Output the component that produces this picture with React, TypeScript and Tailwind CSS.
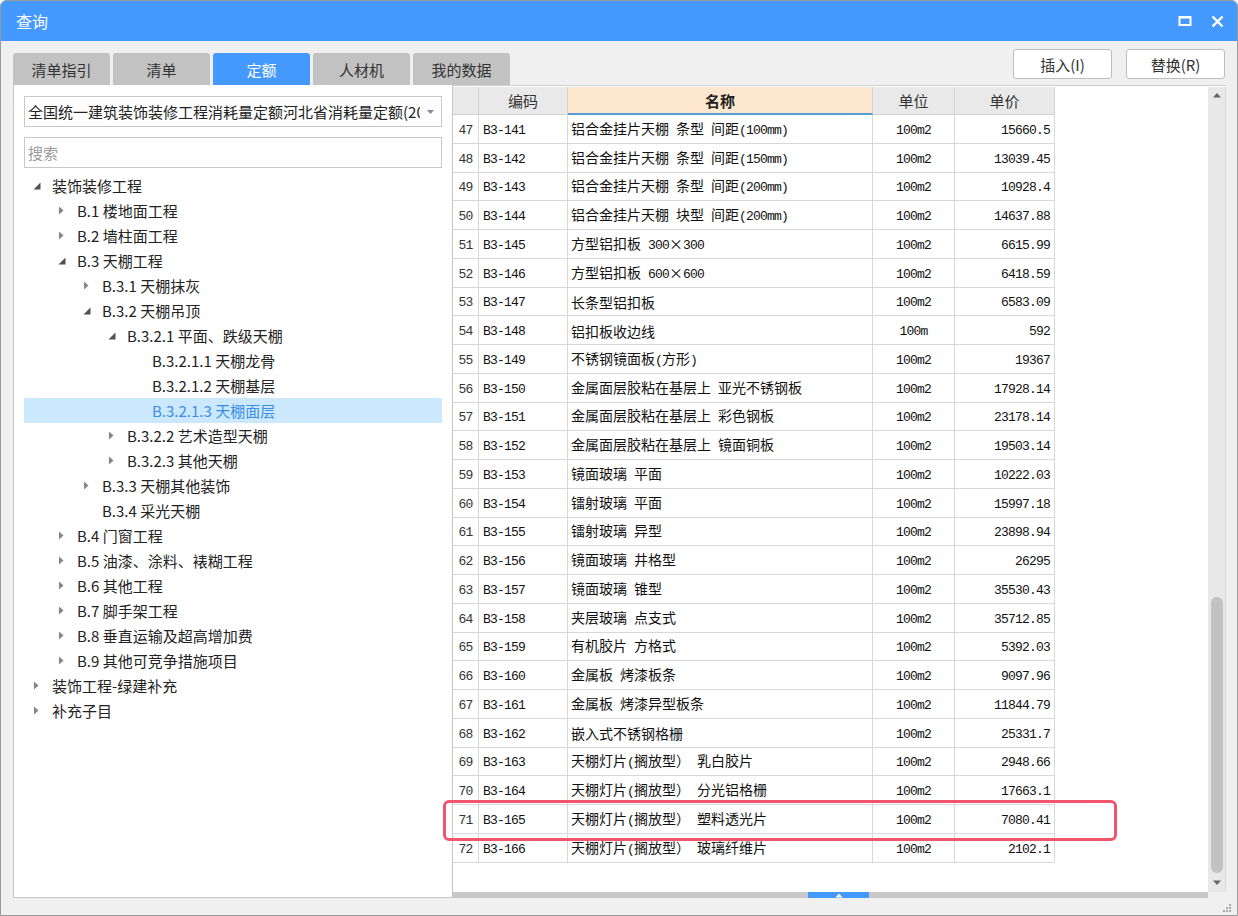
import React from "react";

type Row = [number, string, string, string, string];

const rows: Row[] = [
  [47, "B3-141", "铝合金挂片天棚 条型 间距(100mm)", "100m2", "15660.5"],
  [48, "B3-142", "铝合金挂片天棚 条型 间距(150mm)", "100m2", "13039.45"],
  [49, "B3-143", "铝合金挂片天棚 条型 间距(200mm)", "100m2", "10928.4"],
  [50, "B3-144", "铝合金挂片天棚 块型 间距(200mm)", "100m2", "14637.88"],
  [51, "B3-145", "方型铝扣板 300×300", "100m2", "6615.99"],
  [52, "B3-146", "方型铝扣板 600×600", "100m2", "6418.59"],
  [53, "B3-147", "长条型铝扣板", "100m2", "6583.09"],
  [54, "B3-148", "铝扣板收边线", "100m", "592"],
  [55, "B3-149", "不锈钢镜面板(方形)", "100m2", "19367"],
  [56, "B3-150", "金属面层胶粘在基层上 亚光不锈钢板", "100m2", "17928.14"],
  [57, "B3-151", "金属面层胶粘在基层上 彩色钢板", "100m2", "23178.14"],
  [58, "B3-152", "金属面层胶粘在基层上 镜面铜板", "100m2", "19503.14"],
  [59, "B3-153", "镜面玻璃 平面", "100m2", "10222.03"],
  [60, "B3-154", "镭射玻璃 平面", "100m2", "15997.18"],
  [61, "B3-155", "镭射玻璃 异型", "100m2", "23898.94"],
  [62, "B3-156", "镜面玻璃 井格型", "100m2", "26295"],
  [63, "B3-157", "镜面玻璃 锥型", "100m2", "35530.43"],
  [64, "B3-158", "夹层玻璃 点支式", "100m2", "35712.85"],
  [65, "B3-159", "有机胶片 方格式", "100m2", "5392.03"],
  [66, "B3-160", "金属板 烤漆板条", "100m2", "9097.96"],
  [67, "B3-161", "金属板 烤漆异型板条", "100m2", "11844.79"],
  [68, "B3-162", "嵌入式不锈钢格栅", "100m2", "25331.7"],
  [69, "B3-163", "天棚灯片(搁放型） 乳白胶片", "100m2", "2948.66"],
  [70, "B3-164", "天棚灯片(搁放型） 分光铝格栅", "100m2", "17663.1"],
  [71, "B3-165", "天棚灯片(搁放型） 塑料透光片", "100m2", "7080.41"],
  [72, "B3-166", "天棚灯片(搁放型） 玻璃纤维片", "100m2", "2102.1"],
];

type TreeItem = { level: number; text: string; arrow: "open" | "closed" | "none"; selected?: boolean };

const tree: TreeItem[] = [
  { level: 0, text: "装饰装修工程", arrow: "open" },
  { level: 1, text: "B.1 楼地面工程", arrow: "closed" },
  { level: 1, text: "B.2 墙柱面工程", arrow: "closed" },
  { level: 1, text: "B.3 天棚工程", arrow: "open" },
  { level: 2, text: "B.3.1 天棚抹灰", arrow: "closed" },
  { level: 2, text: "B.3.2 天棚吊顶", arrow: "open" },
  { level: 3, text: "B.3.2.1 平面、跌级天棚", arrow: "open" },
  { level: 4, text: "B.3.2.1.1 天棚龙骨", arrow: "none" },
  { level: 4, text: "B.3.2.1.2 天棚基层", arrow: "none" },
  { level: 4, text: "B.3.2.1.3 天棚面层", arrow: "none", selected: true },
  { level: 3, text: "B.3.2.2 艺术造型天棚", arrow: "closed" },
  { level: 3, text: "B.3.2.3 其他天棚", arrow: "closed" },
  { level: 2, text: "B.3.3 天棚其他装饰", arrow: "closed" },
  { level: 2, text: "B.3.4 采光天棚", arrow: "none" },
  { level: 1, text: "B.4 门窗工程", arrow: "closed" },
  { level: 1, text: "B.5 油漆、涂料、裱糊工程", arrow: "closed" },
  { level: 1, text: "B.6 其他工程", arrow: "closed" },
  { level: 1, text: "B.7 脚手架工程", arrow: "closed" },
  { level: 1, text: "B.8 垂直运输及超高增加费", arrow: "closed" },
  { level: 1, text: "B.9 其他可竞争措施项目", arrow: "closed" },
  { level: 0, text: "装饰工程-绿建补充", arrow: "closed" },
  { level: 0, text: "补充子目", arrow: "closed" },
];

const tabs = ["清单指引", "清单", "定额", "人材机", "我的数据"];

function Mixed({ t }: { t: string }) {
  const parts = t.split(/([\x00-\x7f]+)/).filter((p) => p.length > 0);
  return (
    <span className="whitespace-nowrap leading-[16px]">
      {parts.map((p, i) =>
        /^[\x00-\x7f]+$/.test(p) ? (
          <span key={i} className="font-['Liberation_Mono',monospace] text-[13px] tracking-[-0.8px] whitespace-pre">
            {p}
          </span>
        ) : (
          <span key={i} className="font-['Noto_Sans_CJK_SC',sans-serif] text-[14px]">
            {p}
          </span>
        )
      )}
    </span>
  );
}

function Arrow({ kind }: { kind: "open" | "closed" | "none" }) {
  if (kind === "open")
    return (
      <svg width="8" height="8" viewBox="0 0 8 8" className="shrink-0">
        <polygon points="7.5,0.5 7.5,7.5 0.5,7.5" fill="#505050" />
      </svg>
    );
  if (kind === "closed")
    return (
      <svg width="8" height="9" viewBox="0 0 8 9" className="shrink-0">
        <polygon points="1,0.5 5.5,4.5 1,8.5" fill="#858585" />
      </svg>
    );
  return <span className="w-[8px] shrink-0" />;
}

export default function App() {
  return (
    <div className="relative w-[1238px] h-[916px] overflow-hidden bg-white">
      <div className="flex flex-col w-[1238px] h-[916px] bg-[#f0f0f0] border border-[#9a9a9a] rounded-t-[6px] overflow-hidden font-['Noto_Sans_CJK_SC',sans-serif]">
        {/* Title bar */}
        <div className="flex items-center h-[40px] shrink-0 bg-[#4499ff] pl-[15px] pr-[12px]">
          <span className="text-white text-[16px] leading-none">查询</span>
          <div className="flex-1" />
          <svg width="14" height="12" viewBox="0 0 14 12" className="mr-[19px]">
            <rect x="1.5" y="2" width="11" height="8" fill="none" stroke="white" strokeWidth="2" />
            <rect x="1" y="1" width="12" height="2.5" fill="white" />
          </svg>
          <svg width="13" height="13" viewBox="0 0 13 13" className="mr-[1px]">
            <path d="M1.5 1.5 L11.5 11.5 M11.5 1.5 L1.5 11.5" stroke="white" strokeWidth="2.4" />
          </svg>
        </div>

        {/* Toolbar */}
        <div className="flex h-[44px] shrink-0 px-[12px]">
          <div className="flex items-end gap-[3px]">
            {tabs.map((t) => (
              <div
                key={t}
                className={
                  t === "定额"
                    ? "flex items-center justify-center w-[97px] h-[32px] rounded-t-[3px] bg-[#4499ff] text-white text-[15px] leading-none"
                    : "flex items-center justify-center w-[97px] h-[32px] rounded-t-[3px] bg-[#c2c2c2] text-[#333] text-[15px] leading-none"
                }
              >
                {t}
              </div>
            ))}
          </div>
          <div className="flex-1" />
          <div className="flex items-start pt-[8px] gap-[14px]">
            <div className="flex items-center justify-center w-[99px] h-[30px] bg-white border border-[#bdbdbd] rounded-[3px] text-[15px] text-[#333] leading-none">
              插入(I)
            </div>
            <div className="flex items-center justify-center w-[99px] h-[30px] bg-white border border-[#bdbdbd] rounded-[3px] text-[15px] text-[#333] leading-none">
              替换(R)
            </div>
          </div>
        </div>

        {/* Content */}
        <div className="flex h-[813px] shrink-0 pl-[12px] pr-[11px]">
          {/* Left panel */}
          <div className="flex flex-col w-[440px] shrink-0 bg-white border-l border-r border-b border-[#c6c6c6] px-[10px] pt-[11px]">
            <div className="flex items-center h-[31px] border border-[#c8c8c8] bg-white pl-[3px] pr-[6px]">
              <span className="flex-1 min-w-0 overflow-hidden whitespace-nowrap text-[15px] text-[#222] leading-[20px]">
                全国统一建筑装饰装修工程消耗量定额河北省消耗量定额(2012)
              </span>
              <svg width="9" height="6" viewBox="0 0 9 6" className="ml-[6px] shrink-0">
                <polygon points="1,1 8,1 4.5,5" fill="#8a8a8a" />
              </svg>
            </div>
            <div className="flex items-center h-[31px] mt-[10px] border border-[#c8c8c8] bg-white pl-[3px]">
              <span className="text-[15px] text-[#9a9a9a] leading-none">搜索</span>
            </div>
            <div className="flex flex-col mt-[5px]">
              {tree.map((it, i) => (
                <div
                  key={i}
                  className={
                    it.selected
                      ? "flex items-center h-[25px] bg-[#cce8ff] text-[#3a8ee6]"
                      : "flex items-center h-[25px] text-[#222]"
                  }
                  style={{ paddingLeft: 9 + it.level * 25 }}
                >
                  <Arrow kind={it.arrow} />
                  <span className="ml-[11px] text-[15px] leading-none whitespace-nowrap">{it.text}</span>
                </div>
              ))}
            </div>
          </div>

          {/* Right: table area */}
          <div className="flex flex-col flex-1 border-t border-[#d0d0d0]">
            <div className="flex flex-1 min-h-0 bg-white pt-[1px]">
              <div className="flex-1 flex flex-col">
                {/* header */}
                <div className="grid grid-cols-[26px_89px_305px_82px_100px] h-[28px] w-[602px] text-[15px] leading-none text-[#333]">
                  <div className="bg-[#e9e9e9] border-r border-b border-[#d2d2d2]" />
                  <div className="flex items-center justify-center bg-[#e9e9e9] border-r border-b border-[#d2d2d2]">编码</div>
                  <div className="flex items-center justify-center bg-[#fde8cf] border-r border-[#d2d2d2] border-b-2 border-b-[#5b9bd5] font-bold text-[#222]">
                    名称
                  </div>
                  <div className="flex items-center justify-center bg-[#e9e9e9] border-r border-b border-[#d2d2d2]">单位</div>
                  <div className="flex items-center justify-center bg-[#e9e9e9] border-r border-b border-[#d2d2d2]">单价</div>
                </div>
                {rows.map((r) => (
                  <div
                    key={r[0]}
                    className="grid grid-cols-[26px_89px_305px_82px_100px] h-[28.75px] w-[602px] text-[#111]"
                  >
                    <div className="flex items-center justify-center border-r border-b border-[#d8d8d8] text-[#333]">
                      <Mixed t={String(r[0])} />
                    </div>
                    <div className="flex items-center pl-[4px] border-r border-b border-[#d8d8d8]">
                      <Mixed t={r[1]} />
                    </div>
                    <div className="flex items-center pl-[3px] border-r border-b border-[#d8d8d8] overflow-hidden">
                      <Mixed t={r[2]} />
                    </div>
                    <div className="flex items-center justify-center border-r border-b border-[#d8d8d8]">
                      <Mixed t={r[3]} />
                    </div>
                    <div className="flex items-center justify-end pr-[4px] border-r border-b border-[#d8d8d8]">
                      <Mixed t={r[4]} />
                    </div>
                  </div>
                ))}
              </div>
              {/* vertical scrollbar */}
              <div className="flex flex-col items-center w-[18px] bg-[#e8e8e8] border-r border-[#d6d6d6]">
                <svg width="10" height="6" viewBox="0 0 10 6" className="mt-[5px]">
                  <polygon points="1,5.5 9,5.5 5,1" fill="#666" />
                </svg>
                <div className="flex-1" />
                <div className="w-[12px] h-[276px] rounded-full bg-[#c2c2c2]" />
                <svg width="10" height="6" viewBox="0 0 10 6" className="mt-[7px] mb-[6px]">
                  <polygon points="1,0.5 9,0.5 5,5" fill="#666" />
                </svg>
              </div>
            </div>
            {/* horizontal scrollbar */}
            <div className="flex h-[6px] shrink-0">
              <div className="flex flex-1 bg-[#c8c8c8]">
                <div className="w-[355px]" />
                <div className="flex items-center justify-center w-[61px] bg-[#4499ff]">
                  <svg width="8" height="5" viewBox="0 0 8 5">
                    <polygon points="0.5,4.5 7.5,4.5 4,0.5" fill="white" />
                  </svg>
                </div>
              </div>
              <div className="w-[18px] bg-[#f0f0f0]" />
            </div>
          </div>
        </div>
        <div className="flex-1" />
      </div>

      {/* red highlight annotation */}
      <div className="absolute left-[443px] top-[800px] w-[674px] h-[41px] border-[3px] border-[#f2556b] rounded-[6px] pointer-events-none" />

      {/* resize grip */}
      <svg width="10" height="10" viewBox="0 0 10 10" className="absolute left-[1222px] top-[903px]">
        <rect x="7" y="1" width="2" height="2" fill="#a8a8a8" />
        <rect x="4" y="4" width="2" height="2" fill="#a8a8a8" />
        <rect x="7" y="4" width="2" height="2" fill="#a8a8a8" />
        <rect x="1" y="7" width="2" height="2" fill="#a8a8a8" />
        <rect x="4" y="7" width="2" height="2" fill="#a8a8a8" />
        <rect x="7" y="7" width="2" height="2" fill="#a8a8a8" />
      </svg>
    </div>
  );
}
